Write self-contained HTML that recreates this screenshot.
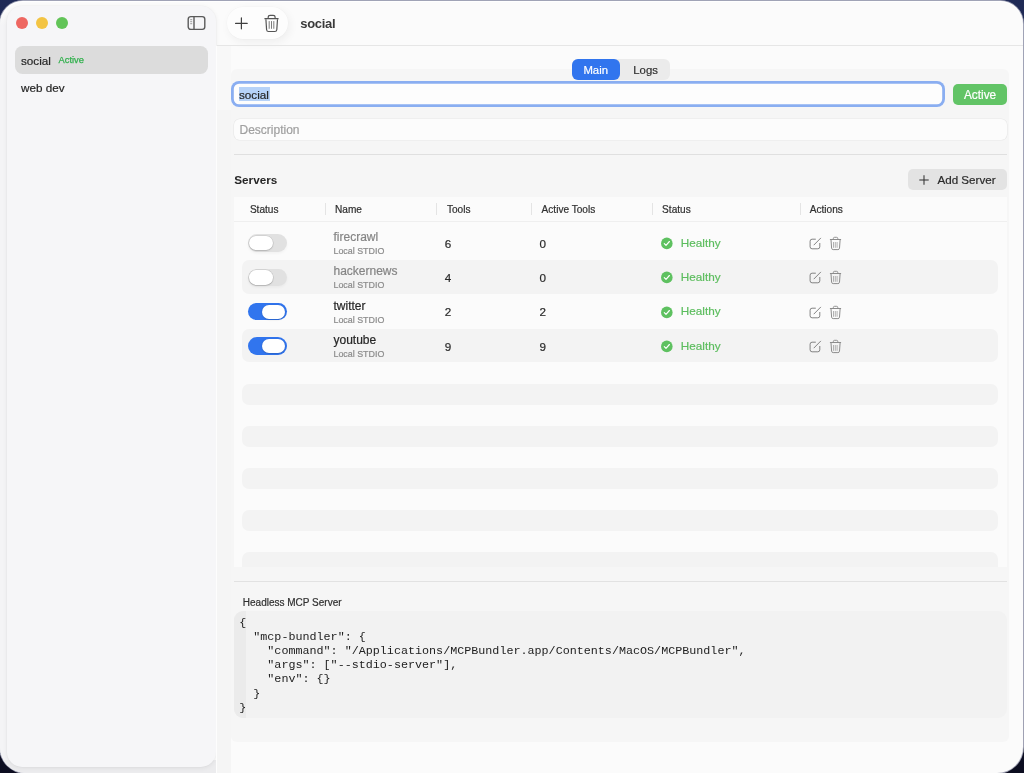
<!DOCTYPE html>
<html><head><meta charset="utf-8">
<style>
*{box-sizing:border-box;margin:0;padding:0}
html,body{width:1024px;height:773px;overflow:hidden}
body{background:linear-gradient(180deg,#1f2a56 0%,#141a3a 50%,#0c0d20 100%);font-family:"Liberation Sans",sans-serif;color:#262626;position:relative}
.abs{position:absolute}
#win{position:absolute;left:0;top:0;width:1024px;height:773px;overflow:hidden;will-change:transform}
#frame{position:absolute;left:0;top:1px;width:1023px;height:772px;border-radius:23px 23px 26px 26px;overflow:hidden;background:#fbfbfb;box-shadow:0 0 0 1px rgba(168,170,188,0.95),inset 0 1px 0 #ffffff}
#side{position:absolute;left:7px;top:6px;width:209px;height:761px;border-radius:15px;background:#f6f6f8;box-shadow:0 0 0 0.6px rgba(0,0,0,0.025),0 1px 5px rgba(0,0,0,0.065)}
#side .abs,#side .t,#side .dot{margin-left:-7px;margin-top:-6px}
.dot{position:absolute;width:12.5px;height:12.5px;border-radius:50%}
.t{position:absolute;white-space:nowrap;line-height:1;-webkit-text-stroke:0.2px currentColor}
</style></head>
<body>
<div id="win"><div id="frame"><div class="abs" style="left:0;top:10px;width:9px;height:762px;background:linear-gradient(180deg,rgba(244,244,246,0) 0px,#f4f4f6 14px)"></div><div class="abs" style="left:0;top:759px;width:217px;height:13px;background:#ececee"></div></div>
<div id="side"><div class="dot" style="left:15.8px;top:16.8px;background:#ee6761"></div>
<div class="dot" style="left:35.8px;top:16.8px;background:#f3c443"></div>
<div class="dot" style="left:55.8px;top:16.8px;background:#62c458"></div>
<svg class="abs" style="left:186px;top:15px" width="21" height="16" viewBox="0 0 21 16">
<rect x="2.2" y="1.6" width="16.6" height="12.8" rx="2.6" fill="none" stroke="#5a5a5a" stroke-width="1.4"/>
<line x1="8" y1="1.6" x2="8" y2="14.4" stroke="#5a5a5a" stroke-width="1.4"/>
<rect x="4.2" y="4.2" width="2" height="1" fill="#9a9a9a"/><rect x="4.2" y="6.2" width="2" height="1" fill="#9a9a9a"/><rect x="4.2" y="8.2" width="2" height="1" fill="#9a9a9a"/>
</svg>
<div class="abs" style="left:15.4px;top:46px;width:192.80px;height:28.00px;background:#dcdcdc;border-radius:7.5px;"></div>
<div class="t" style="left:21px;top:55px;font-size:11.7px;color:#262626;font-weight:normal;">social</div>
<div class="t" style="left:58.6px;top:56px;font-size:9.3px;color:#30b04c;font-weight:normal;-webkit-text-stroke:0.25px #30b04c;">Active</div>
<div class="t" style="left:21px;top:82px;font-size:11.7px;color:#262626;font-weight:normal;">web dev</div>
</div>
<div class="abs" style="left:226.5px;top:7px;width:61.5px;height:31.5px;border-radius:16px;background:#fdfdfd;box-shadow:0 0 0 0.5px rgba(0,0,0,0.02),2px 3px 10px rgba(0,0,0,0.055)"></div>
<svg class="abs" style="left:230px;top:12px" width="22" height="22" viewBox="0 0 22 22">
<line x1="11.4" y1="5.9" x2="11.4" y2="16.8" stroke="#404040" stroke-width="1.2" stroke-linecap="round"/>
<line x1="5.6" y1="11.4" x2="17.2" y2="11.4" stroke="#404040" stroke-width="1.2" stroke-linecap="round"/>
</svg>
<svg class="abs" style="left:260px;top:12px" width="22" height="22" viewBox="0 0 22 22">
<path d="M4.9 6.7 H18.1" stroke="#555" stroke-width="1.2" stroke-linecap="round"/>
<path d="M8.2 6.6 V5.3 Q8.2 3.4 10.2 3.4 H13.1 Q15.1 3.4 15.1 5.3 V6.6" fill="none" stroke="#555" stroke-width="1.15"/>
<path d="M5.9 7.2 L6.6 17.8 Q6.8 19.5 8.5 19.5 H14.9 Q16.6 19.5 16.8 17.8 L17.5 7.2" fill="none" stroke="#555" stroke-width="1.2"/>
<path d="M9.2 9.5 V16.4 M11.5 9.5 V16.4 M13.8 9.5 V16.4" stroke="#666" stroke-width="0.85" stroke-linecap="round"/>
</svg>
<div class="t" style="left:300.3px;top:17px;font-size:13px;color:#3a3a3a;font-weight:bold;letter-spacing:-0.3px;-webkit-text-stroke:0;">social</div>
<div class="abs" style="left:217px;top:45px;width:806.00px;height:1.00px;background:#e6e6e6;border-radius:0px;"></div>
<div class="abs" style="left:216px;top:46px;width:15.00px;height:64.00px;background:#f8f8f8;border-radius:0px;"></div>
<div class="abs" style="left:216px;top:46px;width:1.00px;height:727.00px;background:#fdfdfd;border-radius:0px;"></div>
<div class="abs" style="left:217px;top:110px;width:14.00px;height:663.00px;background:#f5f5f5;border-radius:0px;"></div>
<div class="abs" style="left:216px;top:110px;width:1.00px;height:663.00px;background:#fdfdfd;border-radius:0px;"></div>
<div class="abs" style="left:231px;top:69px;width:777.50px;height:672.50px;background:#f6f6f6;border-radius:6px;"></div>
<div class="abs" style="left:572px;top:59px;width:98.00px;height:21.00px;background:#ebebeb;border-radius:6px;"></div>
<div class="abs" style="left:572px;top:59px;width:48.40px;height:21.00px;background:#3175ee;border-radius:6px;"></div>
<div class="t" style="left:583.4px;top:65px;font-size:11.35px;color:#ffffff;font-weight:normal;">Main</div>
<div class="t" style="left:633.3px;top:65px;font-size:11.35px;color:#2e2e2e;font-weight:normal;">Logs</div>
<div class="abs" style="left:231.3px;top:80.9px;width:713.7px;height:26.6px;border-radius:8px;background:#fdfdfd;box-shadow:inset 0 0 0 2.8px #8aaef1"></div>
<div class="abs" style="left:239px;top:87.3px;width:31.00px;height:13.50px;background:#b6d2f8;border-radius:0px;"></div>
<div class="t" style="left:239px;top:89px;font-size:11.7px;color:#262626;font-weight:normal;">social</div>
<div class="abs" style="left:953px;top:84px;width:54.00px;height:21.00px;background:#62c466;border-radius:5px;"></div>
<div class="t" style="left:963.9px;top:90px;font-size:11.86px;color:#ffffff;font-weight:normal;">Active</div>
<div class="abs" style="left:233.8px;top:118.7px;width:773px;height:21.5px;border-radius:6px;background:#fcfcfc;box-shadow:0 0 0 0.6px rgba(0,0,0,0.06)"></div>
<div class="t" style="left:239.5px;top:124px;font-size:12px;color:#a0a0a0;font-weight:normal;">Description</div>
<div class="abs" style="left:234px;top:154px;width:773.00px;height:1.00px;background:#e0e0e0;border-radius:0px;"></div>
<div class="t" style="left:234.3px;top:174px;font-size:11.7px;color:#262626;font-weight:bold;-webkit-text-stroke:0;">Servers</div>
<div class="abs" style="left:908px;top:169.3px;width:98.70px;height:20.50px;background:#e3e3e3;border-radius:5px;"></div>
<svg class="abs" style="left:917px;top:173px" width="14" height="14" viewBox="0 0 14 14">
<line x1="7" y1="2.2" x2="7" y2="11.8" stroke="#333" stroke-width="1.05"/><line x1="2.3" y1="7" x2="11.7" y2="7" stroke="#333" stroke-width="1.05"/></svg>
<div class="t" style="left:937.5px;top:174px;font-size:11.6px;color:#2a2a2a;font-weight:normal;">Add Server</div>
<div class="abs" style="left:234px;top:197.3px;width:773.00px;height:369.90px;background:#fbfbfb;border-radius:0px;"></div>
<div class="abs" style="left:234px;top:221px;width:773.00px;height:1.00px;background:#efefef;border-radius:0px;"></div>
<div class="abs" style="left:325.1px;top:202.7px;width:1.00px;height:12.80px;background:#e4e4e4;border-radius:0px;"></div>
<div class="abs" style="left:436.4px;top:202.7px;width:1.00px;height:12.80px;background:#e4e4e4;border-radius:0px;"></div>
<div class="abs" style="left:530.9px;top:202.7px;width:1.00px;height:12.80px;background:#e4e4e4;border-radius:0px;"></div>
<div class="abs" style="left:652.4px;top:202.7px;width:1.00px;height:12.80px;background:#e4e4e4;border-radius:0px;"></div>
<div class="abs" style="left:800.2px;top:202.7px;width:1.00px;height:12.80px;background:#e4e4e4;border-radius:0px;"></div>
<div class="t" style="left:249.9px;top:205px;font-size:10.1px;color:#303030;font-weight:normal;">Status</div>
<div class="t" style="left:335px;top:205px;font-size:10.1px;color:#303030;font-weight:normal;">Name</div>
<div class="t" style="left:446.9px;top:205px;font-size:10.1px;color:#303030;font-weight:normal;">Tools</div>
<div class="t" style="left:541.6px;top:205px;font-size:10.1px;color:#303030;font-weight:normal;">Active Tools</div>
<div class="t" style="left:662.1px;top:205px;font-size:10.1px;color:#303030;font-weight:normal;">Status</div>
<div class="t" style="left:809.7px;top:205px;font-size:10.1px;color:#303030;font-weight:normal;">Actions</div>
<div class="abs" style="left:248px;top:234.40px;width:38.5px;height:17.4px;border-radius:9px;background:#e1e1e1;box-shadow:0 1.5px 3px rgba(0,0,0,0.04)"></div>
<div class="abs" style="left:249.2px;top:235.80px;width:24px;height:14.6px;border-radius:7.3px;background:#fff;box-shadow:0 0 0 0.6px rgba(0,0,0,0.12),0 1px 1.5px rgba(0,0,0,0.15)"></div>
<div class="t" style="left:333.5px;top:231px;font-size:12px;color:#858585;font-weight:normal;">firecrawl</div>
<div class="t" style="left:333.5px;top:247px;font-size:8.9px;color:#8c8c8c;font-weight:normal;">Local STDIO</div>
<div class="t" style="left:444.7px;top:238px;font-size:11.7px;color:#2a2a2a;font-weight:normal;">6</div>
<div class="t" style="left:539.5px;top:238px;font-size:11.7px;color:#2a2a2a;font-weight:normal;">0</div>
<svg class="abs" style="left:660px;top:236.00px" width="14" height="14" viewBox="0 0 14 14">
<circle cx="6.8" cy="7.4" r="5.8" fill="#5ec160"/><path d="M4.3 7.6 L6 9.3 L9.4 5.5" fill="none" stroke="#fff" stroke-width="1.15" stroke-linecap="round" stroke-linejoin="round"/></svg>
<div class="t" style="left:680.8px;top:237px;font-size:11.74px;color:#5cbd5e;font-weight:normal;">Healthy</div>
<svg class="abs" style="left:805px;top:232.00px" width="22" height="22" viewBox="0 0 22 22">
<path d="M10.8 7.2 H7.1 Q5.1 7.2 5.1 9.2 V14.8 Q5.1 16.8 7.1 16.8 H12.8 Q14.8 16.8 14.8 14.8 V11" fill="none" stroke="#7c7c7c" stroke-width="0.95"/>
<path d="M9 12.9 L15.6 6.2" stroke="#7c7c7c" stroke-width="0.95" stroke-linecap="round"/></svg>
<svg class="abs" style="left:825px;top:232.00px" width="22" height="22" viewBox="0 0 22 22">
<path d="M5.3 7.5 H15.7" stroke="#8c8c8c" stroke-width="1" stroke-linecap="round"/>
<path d="M8.3 7.4 V6.6 Q8.3 5.3 9.6 5.3 H11.5 Q12.8 5.3 12.8 6.6 V7.4" fill="none" stroke="#8c8c8c" stroke-width="0.95"/>
<path d="M6 7.9 L6.6 16.2 Q6.8 17.6 8.2 17.6 H12.9 Q14.3 17.6 14.5 16.2 L15.1 7.9" fill="none" stroke="#8c8c8c" stroke-width="1"/>
<path d="M8.5 10 V15.8 M10.3 10 V15.8 M12.1 10 V15.8" stroke="#a0a0a0" stroke-width="0.8"/></svg>
<div class="abs" style="left:242.4px;top:260.28px;width:755.40px;height:33.38px;background:#f3f3f3;border-radius:7px;"></div>
<div class="abs" style="left:248px;top:268.68px;width:38.5px;height:17.4px;border-radius:9px;background:#e1e1e1;box-shadow:0 1.5px 3px rgba(0,0,0,0.04)"></div>
<div class="abs" style="left:249.2px;top:270.08px;width:24px;height:14.6px;border-radius:7.3px;background:#fff;box-shadow:0 0 0 0.6px rgba(0,0,0,0.12),0 1px 1.5px rgba(0,0,0,0.15)"></div>
<div class="t" style="left:333.5px;top:265px;font-size:12px;color:#858585;font-weight:normal;">hackernews</div>
<div class="t" style="left:333.5px;top:281px;font-size:8.9px;color:#8c8c8c;font-weight:normal;">Local STDIO</div>
<div class="t" style="left:444.7px;top:272px;font-size:11.7px;color:#2a2a2a;font-weight:normal;">4</div>
<div class="t" style="left:539.5px;top:272px;font-size:11.7px;color:#2a2a2a;font-weight:normal;">0</div>
<svg class="abs" style="left:660px;top:270.28px" width="14" height="14" viewBox="0 0 14 14">
<circle cx="6.8" cy="7.4" r="5.8" fill="#5ec160"/><path d="M4.3 7.6 L6 9.3 L9.4 5.5" fill="none" stroke="#fff" stroke-width="1.15" stroke-linecap="round" stroke-linejoin="round"/></svg>
<div class="t" style="left:680.8px;top:271px;font-size:11.74px;color:#5cbd5e;font-weight:normal;">Healthy</div>
<svg class="abs" style="left:805px;top:266.28px" width="22" height="22" viewBox="0 0 22 22">
<path d="M10.8 7.2 H7.1 Q5.1 7.2 5.1 9.2 V14.8 Q5.1 16.8 7.1 16.8 H12.8 Q14.8 16.8 14.8 14.8 V11" fill="none" stroke="#7c7c7c" stroke-width="0.95"/>
<path d="M9 12.9 L15.6 6.2" stroke="#7c7c7c" stroke-width="0.95" stroke-linecap="round"/></svg>
<svg class="abs" style="left:825px;top:266.28px" width="22" height="22" viewBox="0 0 22 22">
<path d="M5.3 7.5 H15.7" stroke="#8c8c8c" stroke-width="1" stroke-linecap="round"/>
<path d="M8.3 7.4 V6.6 Q8.3 5.3 9.6 5.3 H11.5 Q12.8 5.3 12.8 6.6 V7.4" fill="none" stroke="#8c8c8c" stroke-width="0.95"/>
<path d="M6 7.9 L6.6 16.2 Q6.8 17.6 8.2 17.6 H12.9 Q14.3 17.6 14.5 16.2 L15.1 7.9" fill="none" stroke="#8c8c8c" stroke-width="1"/>
<path d="M8.5 10 V15.8 M10.3 10 V15.8 M12.1 10 V15.8" stroke="#a0a0a0" stroke-width="0.8"/></svg>
<div class="abs" style="left:248px;top:302.96px;width:38.5px;height:17.4px;border-radius:9px;background:#3175ee"></div>
<div class="abs" style="left:261.5px;top:304.76px;width:23.2px;height:13.8px;border-radius:7px;background:#fff;box-shadow:0 0.5px 1.5px rgba(0,0,0,0.25)"></div>
<div class="t" style="left:333.5px;top:300px;font-size:12px;color:#262626;font-weight:normal;">twitter</div>
<div class="t" style="left:333.5px;top:316px;font-size:8.9px;color:#8c8c8c;font-weight:normal;">Local STDIO</div>
<div class="t" style="left:444.7px;top:306px;font-size:11.7px;color:#2a2a2a;font-weight:normal;">2</div>
<div class="t" style="left:539.5px;top:306px;font-size:11.7px;color:#2a2a2a;font-weight:normal;">2</div>
<svg class="abs" style="left:660px;top:304.56px" width="14" height="14" viewBox="0 0 14 14">
<circle cx="6.8" cy="7.4" r="5.8" fill="#5ec160"/><path d="M4.3 7.6 L6 9.3 L9.4 5.5" fill="none" stroke="#fff" stroke-width="1.15" stroke-linecap="round" stroke-linejoin="round"/></svg>
<div class="t" style="left:680.8px;top:305px;font-size:11.74px;color:#5cbd5e;font-weight:normal;">Healthy</div>
<svg class="abs" style="left:805px;top:300.56px" width="22" height="22" viewBox="0 0 22 22">
<path d="M10.8 7.2 H7.1 Q5.1 7.2 5.1 9.2 V14.8 Q5.1 16.8 7.1 16.8 H12.8 Q14.8 16.8 14.8 14.8 V11" fill="none" stroke="#7c7c7c" stroke-width="0.95"/>
<path d="M9 12.9 L15.6 6.2" stroke="#7c7c7c" stroke-width="0.95" stroke-linecap="round"/></svg>
<svg class="abs" style="left:825px;top:300.56px" width="22" height="22" viewBox="0 0 22 22">
<path d="M5.3 7.5 H15.7" stroke="#8c8c8c" stroke-width="1" stroke-linecap="round"/>
<path d="M8.3 7.4 V6.6 Q8.3 5.3 9.6 5.3 H11.5 Q12.8 5.3 12.8 6.6 V7.4" fill="none" stroke="#8c8c8c" stroke-width="0.95"/>
<path d="M6 7.9 L6.6 16.2 Q6.8 17.6 8.2 17.6 H12.9 Q14.3 17.6 14.5 16.2 L15.1 7.9" fill="none" stroke="#8c8c8c" stroke-width="1"/>
<path d="M8.5 10 V15.8 M10.3 10 V15.8 M12.1 10 V15.8" stroke="#a0a0a0" stroke-width="0.8"/></svg>
<div class="abs" style="left:242.4px;top:328.84000000000003px;width:755.40px;height:33.38px;background:#f3f3f3;border-radius:7px;"></div>
<div class="abs" style="left:248px;top:337.24px;width:38.5px;height:17.4px;border-radius:9px;background:#3175ee"></div>
<div class="abs" style="left:261.5px;top:339.04px;width:23.2px;height:13.8px;border-radius:7px;background:#fff;box-shadow:0 0.5px 1.5px rgba(0,0,0,0.25)"></div>
<div class="t" style="left:333.5px;top:334px;font-size:12px;color:#262626;font-weight:normal;">youtube</div>
<div class="t" style="left:333.5px;top:350px;font-size:8.9px;color:#8c8c8c;font-weight:normal;">Local STDIO</div>
<div class="t" style="left:444.7px;top:341px;font-size:11.7px;color:#2a2a2a;font-weight:normal;">9</div>
<div class="t" style="left:539.5px;top:341px;font-size:11.7px;color:#2a2a2a;font-weight:normal;">9</div>
<svg class="abs" style="left:660px;top:338.84px" width="14" height="14" viewBox="0 0 14 14">
<circle cx="6.8" cy="7.4" r="5.8" fill="#5ec160"/><path d="M4.3 7.6 L6 9.3 L9.4 5.5" fill="none" stroke="#fff" stroke-width="1.15" stroke-linecap="round" stroke-linejoin="round"/></svg>
<div class="t" style="left:680.8px;top:340px;font-size:11.74px;color:#5cbd5e;font-weight:normal;">Healthy</div>
<svg class="abs" style="left:805px;top:334.84px" width="22" height="22" viewBox="0 0 22 22">
<path d="M10.8 7.2 H7.1 Q5.1 7.2 5.1 9.2 V14.8 Q5.1 16.8 7.1 16.8 H12.8 Q14.8 16.8 14.8 14.8 V11" fill="none" stroke="#7c7c7c" stroke-width="0.95"/>
<path d="M9 12.9 L15.6 6.2" stroke="#7c7c7c" stroke-width="0.95" stroke-linecap="round"/></svg>
<svg class="abs" style="left:825px;top:334.84px" width="22" height="22" viewBox="0 0 22 22">
<path d="M5.3 7.5 H15.7" stroke="#8c8c8c" stroke-width="1" stroke-linecap="round"/>
<path d="M8.3 7.4 V6.6 Q8.3 5.3 9.6 5.3 H11.5 Q12.8 5.3 12.8 6.6 V7.4" fill="none" stroke="#8c8c8c" stroke-width="0.95"/>
<path d="M6 7.9 L6.6 16.2 Q6.8 17.6 8.2 17.6 H12.9 Q14.3 17.6 14.5 16.2 L15.1 7.9" fill="none" stroke="#8c8c8c" stroke-width="1"/>
<path d="M8.5 10 V15.8 M10.3 10 V15.8 M12.1 10 V15.8" stroke="#a0a0a0" stroke-width="0.8"/></svg>
<div class="abs" style="left:242.4px;top:383.5px;width:755.40px;height:21.30px;background:#f3f3f3;border-radius:7px;"></div>
<div class="abs" style="left:242.4px;top:425.65px;width:755.40px;height:21.30px;background:#f3f3f3;border-radius:7px;"></div>
<div class="abs" style="left:242.4px;top:467.8px;width:755.40px;height:21.30px;background:#f3f3f3;border-radius:7px;"></div>
<div class="abs" style="left:242.4px;top:509.95px;width:755.40px;height:21.30px;background:#f3f3f3;border-radius:7px;"></div>
<div class="abs" style="left:242.4px;top:552.1px;width:755.4px;height:15.10px;background:#f3f3f3;border-radius:7px 7px 0 0"></div>
<div class="abs" style="left:234px;top:581px;width:773.00px;height:1.00px;background:#e2e2e2;border-radius:0px;"></div>
<div class="t" style="left:242.8px;top:598px;font-size:10px;color:#303030;font-weight:normal;">Headless MCP Server</div>
<div class="abs" style="left:234.1px;top:611.2px;width:772.90px;height:106.80px;background:#f2f2f2;border-radius:9px;"></div>
<div class="abs" style="left:234.1px;top:611.2px;width:12px;height:106.8px;background:#ebebeb;border-radius:9px 0 0 9px"></div>
<div class="t" style="left:239.2px;top:618px;font-size:11.72px;color:#222222;font-weight:normal;font-family:'Liberation Mono',monospace;-webkit-text-stroke:0;">{</div>
<div class="t" style="left:239.2px;top:632px;font-size:11.72px;color:#222222;font-weight:normal;font-family:'Liberation Mono',monospace;-webkit-text-stroke:0;">&nbsp;&nbsp;"mcp-bundler":&nbsp;{</div>
<div class="t" style="left:239.2px;top:646px;font-size:11.72px;color:#222222;font-weight:normal;font-family:'Liberation Mono',monospace;-webkit-text-stroke:0;">&nbsp;&nbsp;&nbsp;&nbsp;"command":&nbsp;"/Applications/MCPBundler.app/Contents/MacOS/MCPBundler",</div>
<div class="t" style="left:239.2px;top:660px;font-size:11.72px;color:#222222;font-weight:normal;font-family:'Liberation Mono',monospace;-webkit-text-stroke:0;">&nbsp;&nbsp;&nbsp;&nbsp;"args":&nbsp;["--stdio-server"],</div>
<div class="t" style="left:239.2px;top:674px;font-size:11.72px;color:#222222;font-weight:normal;font-family:'Liberation Mono',monospace;-webkit-text-stroke:0;">&nbsp;&nbsp;&nbsp;&nbsp;"env":&nbsp;{}</div>
<div class="t" style="left:239.2px;top:689px;font-size:11.72px;color:#222222;font-weight:normal;font-family:'Liberation Mono',monospace;-webkit-text-stroke:0;">&nbsp;&nbsp;}</div>
<div class="t" style="left:239.2px;top:703px;font-size:11.72px;color:#222222;font-weight:normal;font-family:'Liberation Mono',monospace;-webkit-text-stroke:0;">}</div>
</div>
</body></html>
